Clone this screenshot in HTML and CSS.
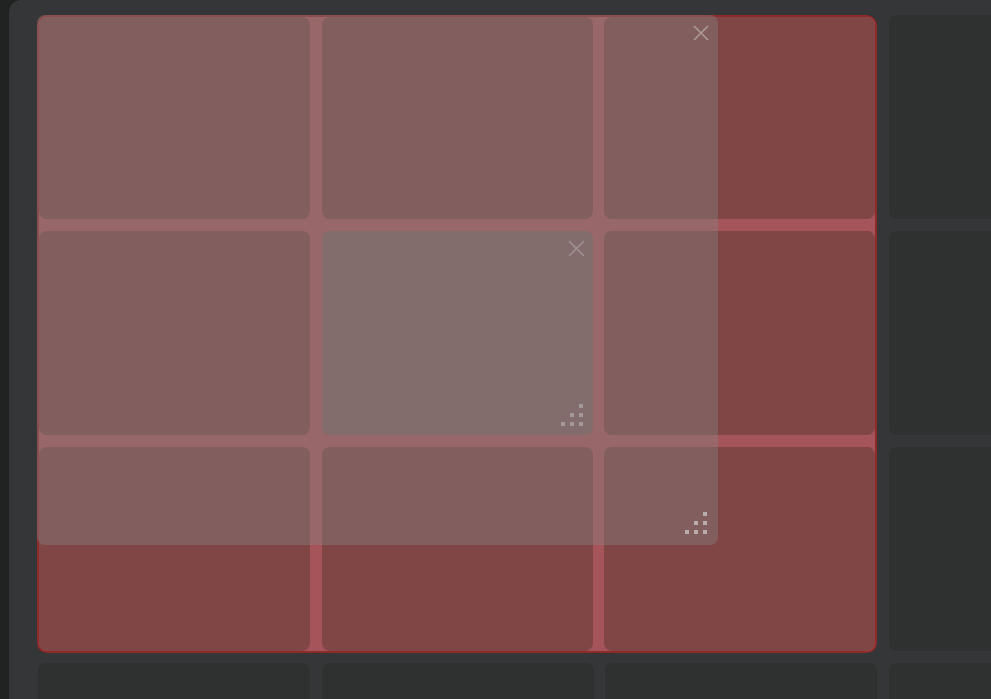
FILE: index.html
```html
<!DOCTYPE html>
<html>
<head>
<meta charset="utf-8">
<link rel="stylesheet" href="styles.css">
</head>
<body>
<div class="rail"></div>
<main class="main">
  <div class="grid">
    <div class="cell"></div><div class="cell"></div><div class="cell"></div><div class="cell"></div>
    <div class="cell"></div><div class="cell"></div><div class="cell"></div><div class="cell"></div>
    <div class="cell"></div><div class="cell"></div><div class="cell"></div><div class="cell"></div>
    <div class="cell"></div><div class="cell"></div><div class="cell"></div><div class="cell"></div>
  </div>

  <div class="selection">
    <div class="sel-grid">
      <div class="sel-cell"></div><div class="sel-cell"></div><div class="sel-cell"></div>
      <div class="sel-cell"></div><div class="sel-cell"></div><div class="sel-cell"></div>
      <div class="sel-cell"></div><div class="sel-cell"></div><div class="sel-cell"></div>
    </div>
  </div>

  <div class="ghost ghost-small">
    <svg class="close" viewBox="0 0 16 16" width="17" height="17"><path d="M1 1L15 15M15 1L1 15"/></svg>
    <div class="handle">
      <span></span><span></span><span class="on"></span>
      <span></span><span class="on"></span><span class="on"></span>
      <span class="on"></span><span class="on"></span><span class="on"></span>
    </div>
  </div>

  <div class="ghost ghost-big">
    <svg class="close" viewBox="0 0 16 16" width="16" height="16"><path d="M1 1L15 15M15 1L1 15"/></svg>
    <div class="handle">
      <span></span><span></span><span class="on"></span>
      <span></span><span class="on"></span><span class="on"></span>
      <span class="on"></span><span class="on"></span><span class="on"></span>
    </div>
  </div>
</main>
</body>
</html>
```

FILE: styles.css
```css
html, body {
  margin: 0;
  padding: 0;
  width: 991px;
  height: 699px;
  overflow: hidden;
  background: #212222;
  font-family: "Liberation Sans", Arial, sans-serif;
}
body {
  display: flex;
}
.rail {
  width: 9px;
  flex: none;
  background: #212222;
}
.main {
  position: relative;
  flex: 1;
  height: 699px;
  overflow: hidden;
  background: #353638;
  border-top-left-radius: 12px;
  padding: 15px 0 0 29px;
  box-sizing: border-box;
}
.grid {
  display: grid;
  grid-template-columns: repeat(4, 272px);
  grid-auto-rows: 204px;
  column-gap: 11.5px;
  row-gap: 12px;
}
.cell {
  background: #2f3130;
  border-radius: 8px;
}

.selection {
  position: absolute;
  left: 28px;
  top: 15px;
  width: 840px;
  height: 638px;
  box-sizing: border-box;
  border: 2px solid #8f2a2b;
  border-radius: 10px;
  background: #a5555a;
  overflow: hidden;
}
.sel-grid {
  display: grid;
  grid-template-columns: 271px 271px 271px;
  grid-template-rows: 202px 204px 204px;
  column-gap: 11.5px;
  row-gap: 12px;
  height: 100%;
}
.sel-cell {
  background: #804646;
  border-radius: 8px;
}

.ghost {
  position: absolute;
  background: rgba(131, 128, 128, 0.43);
  border-radius: 8px;
}
.ghost-big {
  left: 28px;
  top: 15px;
  width: 681px;
  height: 530px;
}
.ghost-small {
  left: 313px;
  top: 231px;
  width: 271px;
  height: 204px;
}
.close {
  position: absolute;
  fill: none;
  stroke: rgba(205, 200, 200, 0.55);
  stroke-width: 1.6;
}
.ghost-big .close {
  right: 9px;
  top: 10px;
}
.ghost-small .close {
  right: 8px;
  top: 9px;
}
.handle {
  position: absolute;
  right: 11px;
  bottom: 11px;
  display: grid;
  grid-template-columns: repeat(3, 4px);
  grid-template-rows: repeat(3, 4px);
  gap: 5px;
}
.ghost-small .handle {
  right: 10px;
  bottom: 9px;
}
.handle span.on {
  background: rgba(205, 200, 200, 0.75);
}
```
